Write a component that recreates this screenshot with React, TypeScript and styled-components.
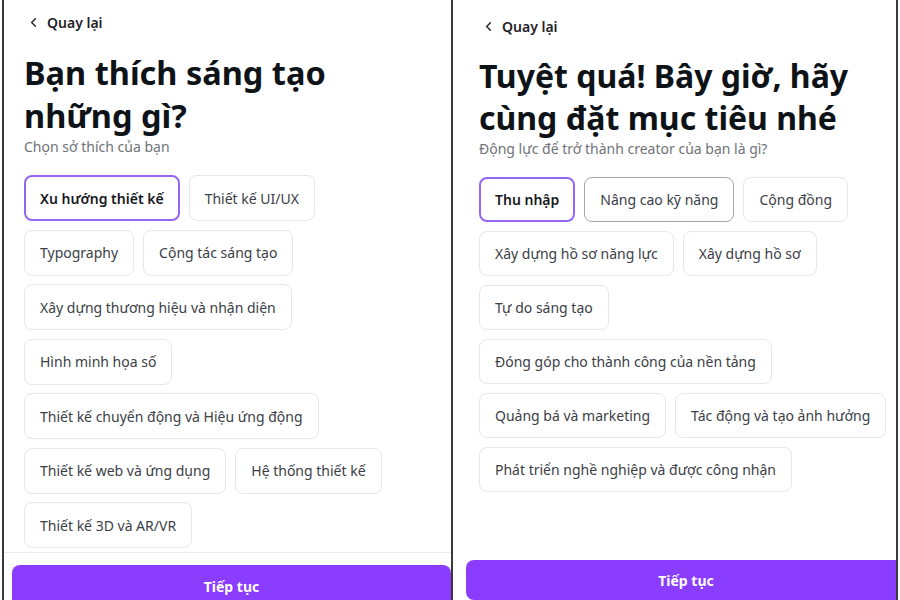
import React from "react";
import styled, { createGlobalStyle } from "styled-components";
import { ChevronLeft } from "lucide-react";

const Global = createGlobalStyle`
  html, body { margin: 0; padding: 0; background: #ffffff; }
  body { font-family: "Noto Sans", "Open Sans", sans-serif; -webkit-font-smoothing: antialiased; }
  * { box-sizing: border-box; }
`;

const Root = styled.div`
  display: flex;
  width: 900px;
  height: 600px;
  padding-left: 2px;
  background: #ffffff;
  overflow: hidden;
`;

const Panel = styled.section<{ $w: number; $padT: number; $first?: boolean }>`
  display: flex;
  flex-direction: column;
  width: ${(p) => p.$w}px;
  height: 600px;
  flex-shrink: 0;
  overflow: hidden;
  border-right: 2px solid #3a3a3a;
  border-left: ${(p) => (p.$first ? "2px solid #3a3a3a" : "none")};
  padding-top: ${(p) => p.$padT}px;
  background: #ffffff;
`;

const Content = styled.div<{ $padL: number }>`
  display: flex;
  flex-direction: column;
  padding-left: ${(p) => p.$padL}px;
  padding-right: 12px;
`;

const Back = styled.div`
  display: flex;
  align-items: center;
  gap: 6px;
  height: 20px;
  font-size: 14px;
  font-weight: 600;
  color: #1f2328;
  margin-left: 2px;
`;

const Title = styled.h1<{ $mt: number; $lh: number; $fs: number }>`
  margin: ${(p) => p.$mt}px 0 0 0;
  font-size: ${(p) => p.$fs}px;
  line-height: ${(p) => p.$lh}px;
  font-weight: 700;
  color: #0e1318;
  white-space: nowrap;
`;

const Sub = styled.p`
  margin: 0;
  font-size: 14px;
  line-height: 20px;
  color: #6f7378;
`;

const ChipGrid = styled.div<{ $mt: number; $rowGap: number }>`
  display: flex;
  flex-direction: column;
  row-gap: ${(p) => p.$rowGap}px;
  margin-top: ${(p) => p.$mt}px;
`;

const ChipRow = styled.div`
  display: flex;
  column-gap: 9px;
`;

const Chip = styled.div<{ $h: number; $state?: "selected" | "hover" }>`
  display: flex;
  align-items: center;
  height: ${(p) => p.$h}px;
  border-radius: 8px;
  font-size: 14px;
  white-space: nowrap;
  background: #ffffff;
  color: ${(p) => (p.$state === "selected" ? "#16191d" : "#3b4046")};
  font-weight: ${(p) => (p.$state === "selected" ? 600 : 400)};
  border: ${(p) =>
    p.$state === "selected"
      ? "2px solid #9466f2"
      : p.$state === "hover"
      ? "1.5px solid #a3a6aa"
      : "1px solid #e6e7e9"};
  padding: 0 ${(p) => (p.$state === "selected" ? 14 : 15)}px;
`;

const Footer = styled.div<{ $h: number; $line?: boolean; $padL: number; $padT: number }>`
  margin-top: auto;
  height: ${(p) => p.$h}px;
  flex-shrink: 0;
  border-top: ${(p) => (p.$line ? "1px solid #ececee" : "none")};
  padding-left: ${(p) => p.$padL}px;
  padding-top: ${(p) => p.$padT}px;
`;

const Button = styled.button<{ $mr: number; $h: number }>`
  display: flex;
  align-items: center;
  justify-content: center;
  width: calc(100% + ${(p) => -p.$mr}px);
  height: ${(p) => p.$h}px;
  flex-shrink: 0;
  border: none;
  border-radius: 8px;
  background: #8b3dff;
  color: #ffffff;
  font-family: "Noto Sans", sans-serif;
  font-size: 14px;
  font-weight: 700;
`;

type ChipDef = { label: string; state?: "selected" | "hover" };

const left: ChipDef[][] = [
  [{ label: "Xu hướng thiết kế", state: "selected" }, { label: "Thiết kế UI/UX" }],
  [{ label: "Typography" }, { label: "Cộng tác sáng tạo" }],
  [{ label: "Xây dựng thương hiệu và nhận diện" }],
  [{ label: "Hình minh họa số" }],
  [{ label: "Thiết kế chuyển động và Hiệu ứng động" }],
  [{ label: "Thiết kế web và ứng dụng" }, { label: "Hệ thống thiết kế" }],
  [{ label: "Thiết kế 3D và AR/VR" }],
];

const right: ChipDef[][] = [
  [
    { label: "Thu nhập", state: "selected" },
    { label: "Nâng cao kỹ năng", state: "hover" },
    { label: "Cộng đồng" },
  ],
  [{ label: "Xây dựng hồ sơ năng lực" }, { label: "Xây dựng hồ sơ" }],
  [{ label: "Tự do sáng tạo" }],
  [{ label: "Đóng góp cho thành công của nền tảng" }],
  [{ label: "Quảng bá và marketing" }, { label: "Tác động và tạo ảnh hưởng" }],
  [{ label: "Phát triển nghề nghiệp và được công nhận" }],
];

function Chips({ rows, h, gap, mt }: { rows: ChipDef[][]; h: number; gap: number; mt: number }) {
  return (
    <ChipGrid $mt={mt} $rowGap={gap}>
      {rows.map((row, i) => (
        <ChipRow key={i}>
          {row.map((c) => (
            <Chip key={c.label} $h={h} $state={c.state}>
              {c.label}
            </Chip>
          ))}
        </ChipRow>
      ))}
    </ChipGrid>
  );
}

export default function App() {
  return (
    <>
      <Global />
      <Root>
        <Panel $w={451} $padT={12} $first>
          <Content $padL={20}>
            <Back>
              <ChevronLeft size={15} strokeWidth={2.2} />
              Quay lại
            </Back>
            <Title $mt={19} $lh={43} $fs={32.5}>
              Bạn thích sáng tạo
              <br />
              những gì?
            </Title>
            <Sub>Chọn sở thích của bạn</Sub>
            <Chips rows={left} h={46} gap={8.5} mt={18} />
          </Content>
          <Footer $h={48} $line $padL={8} $padT={12}>
            <Button $mr={0} $h={42}>Tiếp tục</Button>
          </Footer>
        </Panel>
        <Panel $w={445} $padT={16}>
          <Content $padL={26}>
            <Back>
              <ChevronLeft size={15} strokeWidth={2.2} />
              Quay lại
            </Back>
            <Title $mt={19} $lh={42} $fs={32}>
              Tuyệt quá! Bây giờ, hãy
              <br />
              cùng đặt mục tiêu nhé
            </Title>
            <Sub>Động lực để trở thành creator của bạn là gì?</Sub>
            <Chips rows={right} h={45} gap={9} mt={18} />
          </Content>
          <Footer $h={40} $padL={13} $padT={0}>
            <Button $mr={-10} $h={40}>Tiếp tục</Button>
          </Footer>
        </Panel>
      </Root>
    </>
  );
}
